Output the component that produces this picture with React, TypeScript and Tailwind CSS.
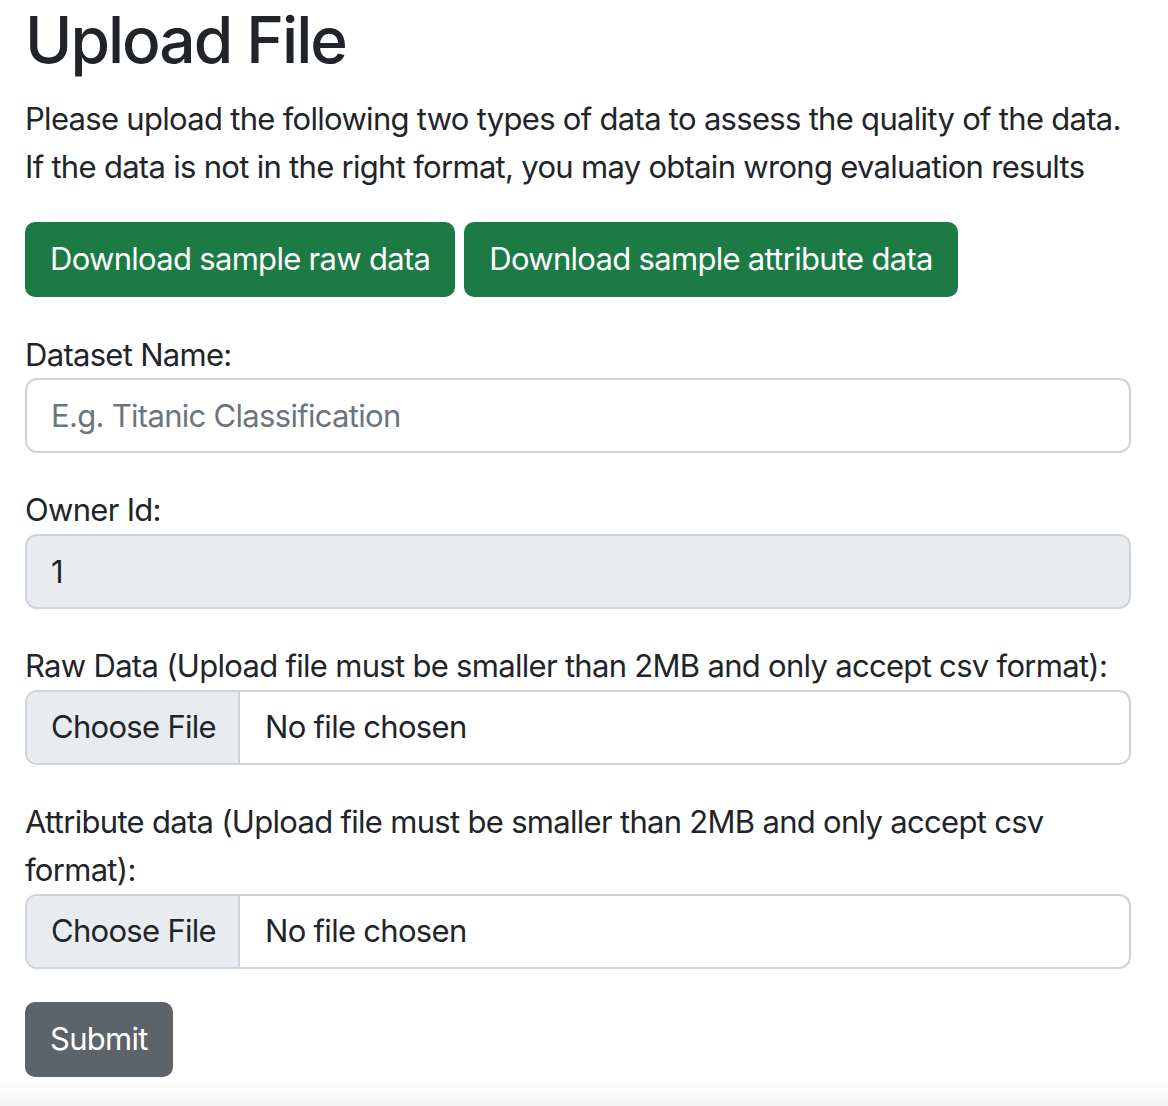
import React from "react";

const font = { fontFamily: "Inter, 'Noto Sans', sans-serif" };

const FileField = ({ label }: { label: string }) => (
    <div className="mb-[33px]">
        <label className="block text-[31px] leading-[48px] tracking-[-0.7px] text-[#212529]">{label}</label>
        <div className="flex h-[75px] w-full overflow-hidden rounded-[12px] border-2 border-[#ced4da] bg-white text-[31px] tracking-[-0.7px] whitespace-nowrap text-[#212529]">
            <div className="flex w-[213px] shrink-0 items-center border-r-2 border-[#ced4da] bg-[#e9ecef] px-[24px]">Choose File</div>
            <div className="flex items-center px-[25px]">No file chosen</div>
        </div>
    </div>
);

export default function App() {
    return (
        <div style={font} className="flex min-h-[1106px] flex-col bg-white text-[#212529]">
            <div className="pl-[25px] pr-[37px]">
                {/* Title */}
                <h1 className="mb-[16px] text-[64px] font-medium leading-[79px] tracking-[-2px]">Upload File</h1>
                <p className="mb-[31px] text-[31px] leading-[48px] tracking-[-0.7px]">
                    Please upload the following two types of data to assess the quality of the data.
                    <br />
                    If the data is not in the right format, you may obtain wrong evaluation results
                </p>

                {/* Sample downloads */}
                <div className="mb-[34px] flex gap-[9px] text-[31px] tracking-[-0.7px]">
                    <button className="h-[75px] rounded-[10px] bg-[#1c7a45] px-[25px] text-white">
                        Download sample raw data
                    </button>
                    <button className="h-[75px] rounded-[10px] bg-[#1c7a45] px-[25px] text-white">
                        Download sample attribute data
                    </button>
                </div>

                {/* Form */}
                <div className="mb-[33px] text-[31px] tracking-[-0.7px]">
                    <label className="block leading-[47px]">Dataset Name:</label>
                    <input
                        placeholder="E.g. Titanic Classification"
                        className="h-[75px] w-full rounded-[12px] border-2 border-[#ced4da] bg-white px-[24px] outline-none placeholder:text-[#6c757d]"
                    />
                </div>
                <div className="mb-[33px] text-[31px] tracking-[-0.7px]">
                    <label className="block leading-[48px]">Owner Id:</label>
                    <input
                        value="1"
                        readOnly
                        className="h-[75px] w-full rounded-[12px] border-2 border-[#ced4da] bg-[#e9ecef] px-[24px] outline-none"
                    />
                </div>
                <FileField label="Raw Data (Upload file must be smaller than 2MB and only accept csv format):" />
                <FileField label="Attribute data (Upload file must be smaller than 2MB and only accept csv format):" />

                <button className="h-[75px] rounded-[10px] bg-[#5c636a] px-[25px] text-[31px] tracking-[-0.7px] text-white">
                    Submit
                </button>
            </div>
            <div className="flex-1" />
            <div className="h-[28px] bg-gradient-to-b from-white to-[#f4f4f4]" />
        </div>
    );
}
